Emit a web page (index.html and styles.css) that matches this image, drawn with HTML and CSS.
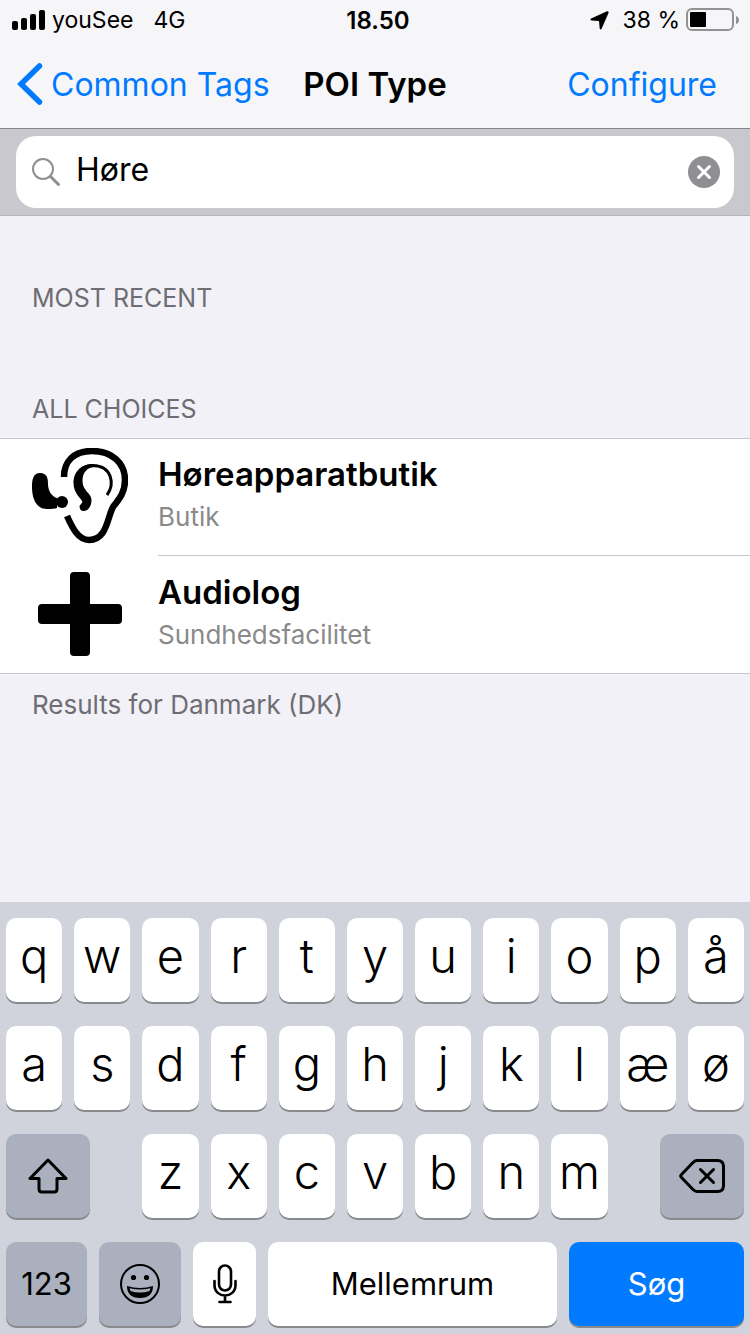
FILE: index.html
```html
<!DOCTYPE html>
<html lang="da">
<head>
<meta charset="utf-8">
<meta name="viewport" content="width=device-width, initial-scale=1">
<title>POI Type</title>
<link rel="stylesheet" href="styles.css">
</head>
<body>
<header class="top">
  <div class="status">
    <div class="status-side">
      <svg class="signal" width="34" height="20" viewBox="0 0 34 20" aria-hidden="true"><rect x="0" y="11" width="6" height="9" rx="2"/><rect x="9" y="8" width="6" height="12" rx="2"/><rect x="18" y="4" width="6" height="16" rx="2"/><rect x="27" y="0" width="6" height="20" rx="2"/></svg>
      <span>youSee</span>
      <span class="network">4G</span>
    </div>
    <time class="clock">18.50</time>
    <div class="status-side status-end">
      <svg class="location" width="19" height="19" viewBox="0 0 19 19" aria-hidden="true"><path d="M17 .3Q19 0 18.500 2L11.700 17.500Q10.500 19.500 9.700 17.500L9 10 1.600 9.400Q-.7 8.500 1.200 7.500Z"/></svg>
      <span>38 %</span>
      <svg class="battery" width="54" height="24" viewBox="0 0 54 24" aria-hidden="true"><rect x="1" y="1" width="46" height="21" rx="5" fill="none" stroke="#929294" stroke-width="2"/><rect x="4" y="4" width="16" height="15" rx="1"/><path d="M50 8q3 1 3 4t-3 4z" fill="#929294"/></svg>
    </div>
  </div>
  <nav class="nav">
    <button class="nav-button back" type="button"><svg width="26" height="42" viewBox="0 0 26 42" aria-hidden="true"><path d="M22.500 3 4 21l18.500 18" fill="none" stroke="#007aff" stroke-width="5.500" stroke-linecap="round" stroke-linejoin="miter"/></svg><span>Common Tags</span></button>
    <h1 class="title">POI Type</h1>
    <button class="nav-button configure" type="button">Configure</button>
  </nav>
</header>
<form class="search">
  <div class="field">
    <svg width="28" height="28" viewBox="0 0 28 28" fill="none" stroke="#8e8e93" aria-hidden="true"><circle cx="11" cy="11" r="10" stroke-width="2"/><path d="m18.500 18.500 8 8" stroke-width="3" stroke-linecap="round"/></svg>
    <input class="query" type="text" value="Høre" aria-label="Search">
    <button class="clear" type="button" aria-label="Clear"><svg width="32" height="32" viewBox="0 0 32 32"><circle cx="16" cy="16" r="16" fill="#8e8e93"/><path d="m10.500 10.500 11 11m0-11-11 11" stroke="#fff" stroke-width="3" stroke-linecap="round"/></svg></button>
  </div>
</form>
<main class="content">
  <h2 class="section recent">MOST RECENT</h2>
  <h2 class="section all">ALL CHOICES</h2>
  <ul class="list">
    <li class="row">
      <svg class="row-icon" width="96" height="96" viewBox="0 0 96 96" aria-hidden="true"><g fill="none" stroke="#000" stroke-linecap="butt"><path d="M32 29C32 13 42 3 60 3c20 0 33 12 33 29 0 12-5 18-12 27C75 70 75 92 57 92 46 92 40 79 35 68" stroke-width="6.500"/><path d="M75 47C83 36 80 18 61 17.500c-8 0-12 3-15 8" stroke-width="3"/></g><path d="M61 16C47 16 41.500 26 41.500 35c0 11 8 15 9 19l-3 4q0 5 4 5c5 0 8-5 8-11 0-7-9-9-9-19 0-8 4-13 11-14z"/><path d="M8 25c7 0 8 5 8 11 0 8 5 13 9 14v10q-3 1-10 1C4 61 0 50 0 39c0-7 1-14 8-14z"/><circle cx="30" cy="54" r="6"/></svg>
      <div class="row-text"><h3 class="name">Høreapparatbutik</h3><p class="kind">Butik</p></div>
    </li>
    <li class="row">
      <svg class="row-icon" width="96" height="96" viewBox="0 0 96 96" aria-hidden="true"><path d="M42 6h12q4 0 4 4v28h28q4 0 4 4v12q0 4-4 4H58v28q0 4-4 4H42q-4 0-4-4V58H10q-4 0-4-4V42q0-4 4-4h28V10q0-4 4-4z"/></svg>
      <div class="row-text"><h3 class="name">Audiolog</h3><p class="kind">Sundhedsfacilitet</p></div>
    </li>
  </ul>
  <p class="note">Results for Danmark (DK)</p>
</main>
<section class="keyboard" aria-label="Keyboard">
  <div class="keys letters">
    <button class="key">q</button><button class="key">w</button><button class="key">e</button><button class="key">r</button><button class="key">t</button><button class="key">y</button><button class="key">u</button><button class="key">i</button><button class="key">o</button><button class="key">p</button><button class="key">å</button>
  </div>
  <div class="keys letters">
    <button class="key">a</button><button class="key">s</button><button class="key">d</button><button class="key">f</button><button class="key">g</button><button class="key">h</button><button class="key">j</button><button class="key">k</button><button class="key">l</button><button class="key">æ</button><button class="key">ø</button>
  </div>
  <div class="keys letters">
    <button class="key control shift" aria-label="Shift"><svg width="40" height="36" viewBox="0 0 40 36" fill="none" stroke="#000" stroke-width="3" stroke-linejoin="round"><path d="M20 2 2 20.500h9V31q0 3 3 3h12q3 0 3-3V20.500h9z"/></svg></button>
    <button class="key">z</button><button class="key">x</button><button class="key">c</button><button class="key">v</button><button class="key">b</button><button class="key">n</button><button class="key">m</button>
    <button class="key control delete" aria-label="Delete"><svg width="46" height="34" viewBox="0 0 46 34" fill="none" stroke="#000" stroke-width="3" stroke-linecap="round" stroke-linejoin="round"><path d="M18 1.500h20.500q6 0 6 6v19q0 6-6 6H18q-2 0-4-2L2.500 18.500q-1.500-1.500 0-3L14 3.500q2-2 4-2zM21.500 10.500l13 13m0-13-13 13"/></svg></button>
  </div>
  <div class="keys actions">
    <button class="key word control">123</button>
    <button class="key control" aria-label="Emoji"><svg width="40" height="40" viewBox="0 0 40 40"><circle cx="20" cy="20" r="19" fill="none" stroke="#000" stroke-width="2"/><circle cx="13.500" cy="13.500" r="2.600"/><circle cx="26.500" cy="13.500" r="2.600"/><path d="M7 22q13 4 26 0 0 12-13 12T7 22z"/><path d="M9.500 24.300q10.500 2.500 21 0l-1 2.700q-9.500 3-19 0z" fill="#abb0be"/></svg></button>
    <button class="key" aria-label="Dictate"><svg width="24" height="40" viewBox="0 0 24 40" fill="none" stroke="#000" stroke-width="2.600" stroke-linecap="round"><rect x="6" y="1.500" width="12" height="25" rx="6"/><path d="M1.500 17v4c0 14 21 14 21 0v-4M12 31.500V38M6.500 38h11"/></svg></button>
    <button class="key word">Mellemrum</button>
    <button class="key word go">Søg</button>
  </div>
</section>
</body>
</html>
```

FILE: styles.css
```css
* {
  box-sizing: border-box;
}

body {
  margin: 0;
  min-height: 100vh;
  display: flex;
  flex-direction: column;
  background: #f2f1f7;
  color: #000;
  font-family: Inter, "Noto Sans", sans-serif;
}

h1, h2, h3, p, ul {
  margin: 0;
  padding: 0;
}

button {
  padding: 0;
  border: 0;
  background: none;
  color: inherit;
  font: inherit;
}

svg {
  display: block;
  flex: none;
}

.top {
  background: #f6f6f9;
  border-bottom: 1px solid #858589;
}

.status {
  display: grid;
  grid-template-columns: 1fr auto 1fr;
  align-items: center;
  height: 40px;
  padding: 0 10px 0 12px;
  font-size: 23px;
}

.status-side {
  display: flex;
  align-items: center;
  gap: 6px;
}

.status-end {
  justify-content: flex-end;
}

.network {
  margin-left: 14px;
}

.location {
  margin-right: 8px;
}

.clock {
  padding-left: 4px;
  font-size: 24px;
  font-weight: 600;
}

.nav {
  display: grid;
  grid-template-columns: 1fr auto 1fr;
  align-items: center;
  height: 88px;
  padding: 0 17px;
  font-size: 32px;
}

.nav-button {
  color: #007aff;
}

.back {
  display: flex;
  align-items: center;
  gap: 8px;
  justify-self: start;
}

.title {
  font-size: 33px;
  font-weight: 600;
}

.configure {
  justify-self: end;
  padding-right: 16px;
}

.search {
  padding: 7px 16px;
  background: #c9c8ce;
  border-bottom: 1px solid #b6b5bb;
}

.field {
  display: flex;
  align-items: center;
  height: 72px;
  padding: 0 14px 0 16px;
  background: #fff;
  border-radius: 20px;
}

.query {
  flex: 1;
  min-width: 0;
  padding: 0 16px 4px;
  border: 0;
  outline: 0;
  background: none;
  color: #000;
  font: 32px/40px Inter, "Noto Sans", sans-serif;
}

.content {
  flex: 1;
}

.section {
  padding: 0 32px;
  color: #6d6d72;
  font-size: 25px;
  font-weight: 400;
  line-height: 32px;
}

.recent {
  padding-top: 66px;
}

.all {
  padding-top: 79px;
  padding-bottom: 13px;
}

.list {
  list-style: none;
  background: #fff;
  border-top: 1px solid #c8c7cc;
  border-bottom: 1px solid #c8c7cc;
}

.row {
  display: flex;
  gap: 30px;
  padding-left: 32px;
}

.row-icon {
  margin-top: 9px;
}

.row-text {
  flex: 1;
  padding: 13px 0 17px;
}

.row + .row .row-icon {
  margin-top: 11px;
}

.row + .row .row-text {
  padding-top: 14px;
  border-top: 1px solid #c8c7cc;
}

.name {
  font-size: 33px;
  font-weight: 600;
  line-height: 44px;
}

.kind {
  color: #8a8a8a;
  font-size: 26px;
  line-height: 42px;
}

.note {
  padding: 15px 32px;
  color: #6d6d72;
  font-size: 26px;
  line-height: 32px;
}

.keyboard {
  display: grid;
  gap: 24px;
  padding: 16px 6px 8px;
  background: #d0d3db;
}

.keys {
  display: grid;
  gap: 12px;
}

.letters {
  grid-template-columns: repeat(11, minmax(0, 1fr));
}

.actions {
  grid-template-columns: 81fr 82fr 63fr 289fr 175fr;
}

.key {
  display: flex;
  align-items: center;
  justify-content: center;
  height: 84px;
  padding-bottom: 8px;
  border-radius: 10px;
  background: #fff;
  box-shadow: 0 2px 0 #898a8d;
  font-size: 47px;
  font-weight: 300;
  line-height: 56px;
}

.key:has(svg) {
  padding-bottom: 0;
}

.control {
  background: #abb0be;
}

.shift, .delete {
  grid-column: span 2;
  width: 84px;
}

.delete {
  justify-self: end;
}

.word {
  padding-bottom: 0;
  font-size: 31px;
  font-weight: 400;
}

.go {
  background: #007aff;
  color: #fff;
}
```
